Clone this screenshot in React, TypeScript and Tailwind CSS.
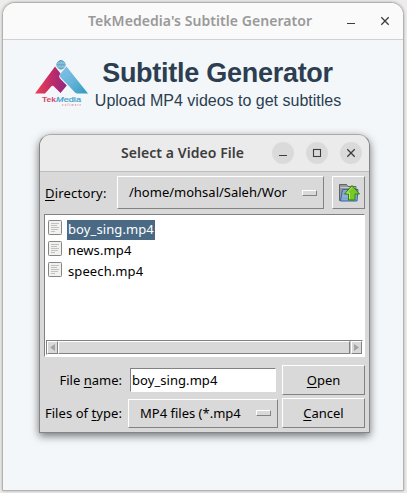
import React from 'react';

const raised = 'border border-t-white border-l-white border-r-[#828282] border-b-[#828282]';
const sunken = 'border border-t-[#828282] border-l-[#828282] border-r-white border-b-white';

function Logo() {
  return (
    <svg className="h-[50px] w-[56px] shrink-0" viewBox="0 0 56 50">
      <defs>
        <linearGradient id="red" x1="0" y1="0" x2="1" y2="0">
          <stop offset="0" stopColor="#ef4053" />
          <stop offset="0.55" stopColor="#bd2c69" />
          <stop offset="1" stopColor="#8c2784" />
        </linearGradient>
        <linearGradient id="blue" x1="0" y1="0" x2="1" y2="1">
          <stop offset="0" stopColor="#80c1e8" />
          <stop offset="0.5" stopColor="#67b4d9" />
          <stop offset="1" stopColor="#2f9abd" />
        </linearGradient>
      </defs>
      <path d="M1 34.500 21 7.500 26.500 14.500c-1.700 2-1.700 4 0 5.500l6.300 6.500-6.300 7.500-6.500-6.500c-1-1-2-1-3 .2l-6 6.800Z" fill="url(#red)" />
      <path d="M32.500 7.500 54 34.500H43.500c-1 0-2-.5-3-1.500l-6.500-7-7-7c-1.500-1.500-1.500-3.500 0-5Z" fill="url(#blue)" />
      <g fill="none" stroke="#4b9bbf" strokeWidth="0.8">
        <circle cx="27" cy="5.800" r="4.200" fill="#afd5e7" />
        <path d="M22.800 5.800h8.400M27 1.600v8.400" />
        <ellipse cx="27" cy="5.800" rx="2.100" ry="4.200" />
      </g>
      <g fontFamily="Liberation Sans, sans-serif">
        <text x="8" y="42.500" fontSize="7.500" fontWeight="bold" fill="#d7476b" textLength="14" lengthAdjust="spacingAndGlyphs">Tek</text>
        <text x="22" y="42.500" fontSize="7.500" fill="#3fa0c7" stroke="#3fa0c7" strokeWidth="0.200" textLength="25" lengthAdjust="spacingAndGlyphs"><tspan fontStyle="italic">M</tspan>edia</text>
        <text x="28" y="46.500" fontSize="2.600" fontWeight="bold" fill="#e28298" textLength="19" lengthAdjust="spacing">software</text>
      </g>
    </svg>
  );
}

function WindowIcon({ kind, className = '' }: { kind: 'min' | 'max' | 'close'; className?: string }) {
  return (
    <svg className={`size-[22px] shrink-0 ${className}`} viewBox="0 0 22 22" fill="none" stroke="#3d3d3d">
      {kind === 'min' && <path d="M7 13.500h8" />}
      {kind === 'max' && <rect x="7.500" y="7.500" width="7" height="7" strokeWidth="1.100" />}
      {kind === 'close' && <path d="M7.300 7.300l7.400 7.400M14.700 7.300l-7.400 7.400" strokeWidth="1.300" />}
    </svg>
  );
}

function FolderUp() {
  return (
    <svg className="h-[20px] w-[22px]" viewBox="0 0 22 20">
      <path d="M1.500 17.500V1.500h7l1.500 2h8v14Z" fill="#999" stroke="#626463" />
      <path d="M2.500 4.500h15" stroke="#c8c8c8" />
      <path d="M4.500 6.500h15.500l-1 11.500H2.500Z" fill="#8badd7" stroke="#3567a5" />
      <path d="M5 8.500h12M4.500 10.500h12M4 15.500h13" stroke="#749bcb" strokeWidth="0.700" />
      <path d="M14 2.500 6.500 11h4v6h6.500v-6h4.500Z" fill="#79c926" stroke="#347e0a" />
      <path d="M14 4.200 8.700 10h2.800v6" fill="none" stroke="#bbed76" strokeWidth="0.900" />
    </svg>
  );
}

function FileRow({ name, selected = false }: { name: string; selected?: boolean }) {
  return (
    <div className="flex h-[21px] items-center">
      <svg className="mb-[4px] mr-[5px] h-[16px] w-[14px] shrink-0" viewBox="0 0 14 16">
        <rect x="0.500" y="0.500" width="13" height="14" rx="0.800" fill="#f1f1ef" stroke="#858784" />
        <path d="M3 3.500h8M3 5.500h6M3 7.500h8M3 9.500h7M3 11.500h4" stroke="#c1c1c1" />
      </svg>
      <span className={`flex h-[20px] items-center px-[1px] tracking-[0.1px] ${selected ? 'bg-[#4a6984] text-white' : ''}`}>{name}</span>
    </div>
  );
}

function Key({ children }: { children: string }) {
  return <span className="underline decoration-1 underline-offset-[2px]">{children}</span>;
}

function MenuMark() {
  return <span className={`h-[6px] w-[15px] shrink-0 bg-[#d9d9d9] ${raised}`} />;
}

export default function App() {
  return (
    <main className="h-[493px] w-[407px] overflow-hidden bg-[#eeedec] pl-[2px] pt-[2px] font-['Noto_Sans',sans-serif] text-[13px] leading-none text-black">
      <section className="h-[489px] w-[402px] rounded-t-[13px] border border-[#b2b2b2] bg-[#f3f7fa] shadow-[0_0_3px_#aaa]">
        <header className="flex h-[37px] items-center rounded-t-[12px] border-b border-[#d1d1d1] bg-[#fafafa]">
          <h1 className="ml-[85px] w-[252px] whitespace-nowrap text-[14px] font-semibold tracking-[0.06px] text-[#999]">TekMededia's Subtitle Generator</h1>
          <WindowIcon kind="min" />
          <WindowIcon kind="close" className="ml-[12px]" />
        </header>

        <div className="ml-[31px] mt-[19px] flex h-[76px] items-start text-[#2c3e50]">
          <Logo />
          <div className="ml-[5px] flex w-[246px] flex-col items-center whitespace-nowrap font-['Liberation_Sans',sans-serif]">
            <h2 className="pr-px text-[27px] font-bold leading-[28px] tracking-[-0.27px]">Subtitle Generator</h2>
            <p className="mt-[4px] text-[16px] leading-[20px]">Upload MP4 videos to get subtitles</p>
          </div>
        </div>

        <section className="ml-[36px] mt-[-1px] h-[299px] w-[331px] rounded-t-[12px] border border-[#858585] border-t-[#aaa] bg-[#d9d9d9] shadow-[0_3px_8px_#0008]">
          <header className="flex h-[37px] items-center rounded-t-[11px] border-b border-[#bdbdbd] bg-[#ebebeb]">
            <h2 className="ml-[81px] w-[151px] whitespace-nowrap text-[14px] font-semibold tracking-[0.06px] text-[#3d3d3d]">Select a Video File</h2>
            <WindowIcon kind="min" className="rounded-full bg-[#dadada]" />
            <WindowIcon kind="max" className="ml-[12px] rounded-full bg-[#dadada]" />
            <WindowIcon kind="close" className="ml-[12px] rounded-full bg-[#dadada]" />
          </header>

          <div className="flex items-start px-[4px] pt-[4px]">
            <label className="flex h-[34px] w-[73px] items-center whitespace-nowrap pl-px tracking-[0.2px]"><span><Key>D</Key>irectory:</span></label>
            <div className={`flex h-[33px] w-[207px] items-center justify-between pl-[11px] pr-[6px] ${raised}`}>
              <span>/home/mohsal/Saleh/Wor</span>
              <MenuMark />
            </div>
            <button className={`ml-[8px] flex h-[33px] w-[33px] items-center justify-center ${raised}`}><FolderUp /></button>
          </div>

          <div className={`ml-[4px] mt-[4px] flex h-[143px] w-[321px] flex-col bg-white p-px ${sunken}`}>
            <div className="flex-1 pl-[2px] pt-[3px]">
              <FileRow name="boy_sing.mp4" selected />
              <FileRow name="news.mp4" />
              <FileRow name="speech.mp4" />
            </div>
            <div className={`flex h-[15px] justify-between bg-[#c3c3c3] ${sunken}`}>
              <span className={`flex w-[11px] items-center justify-center bg-[#d9d9d9] ${raised}`}><svg className="size-[9px] shrink-0" viewBox="0 0 9 9"><path d="M7 1v7L2 4.500Z" fill="#a3a3a3" /></svg></span>
              <span className={`flex-1 bg-[#d9d9d9] ${raised}`} />
              <span className={`ml-px flex w-[11px] items-center justify-center bg-[#d9d9d9] ${raised}`}><svg className="size-[9px] shrink-0" viewBox="0 0 9 9"><path d="M2 1v7l5-3.500Z" fill="#a3a3a3" /></svg></span>
            </div>
          </div>

          <div className="mt-[8px] flex h-[30px] items-center">
            <label className="w-[82px] whitespace-nowrap text-right">File <Key>n</Key>ame:</label>
            <input className={`ml-[8px] h-[24px] w-[146px] bg-white px-px tracking-[0.06px] outline-none ${sunken}`} defaultValue="boy_sing.mp4" />
            <button className={`ml-[6px] h-[30px] w-[83px] ${raised}`}><Key>O</Key>pen</button>
          </div>
          <div className="mt-[3px] flex h-[30px] items-center">
            <label className="w-[82px] whitespace-nowrap text-right tracking-[0.06px]">Files of <Key>t</Key>ype:</label>
            <div className={`ml-[6px] flex h-[29px] w-[150px] items-center justify-between pl-[11px] pr-[6px] ${raised}`}>
              <span>MP4 files (*.mp4</span>
              <MenuMark />
            </div>
            <button className={`ml-[4px] h-[30px] w-[83px] ${raised}`}><Key>C</Key>ancel</button>
          </div>
        </section>
      </section>
    </main>
  );
}
